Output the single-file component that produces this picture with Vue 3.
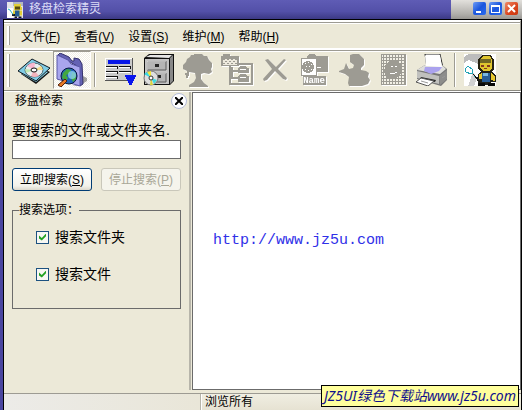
<script setup>
import { ref } from 'vue'

const menus = [
  { label: '文件', key: 'F' },
  { label: '查看', key: 'V' },
  { label: '设置', key: 'S' },
  { label: '维护', key: 'M' },
  { label: '帮助', key: 'H' },
]

const keyword = ref('')
const searchFolders = ref(true)
const searchFiles = ref(true)
const searching = ref(false)

function startSearch() {
  searching.value = true
}

function stopSearch() {
  searching.value = false
}
</script>

<template>
  <div class="window">
    <!-- Title bar -->
    <header class="title-bar">
      <svg class="title-icon" width="16" height="16" viewBox="0 0 32 32" aria-hidden="true">
        <rect width="32" height="32" fill="#e4e4e8" />
        <path d="M0 12h12v20H0z" fill="#fff" />
        <path d="M12 0h20v8H12z" fill="#b4b8c0" />
        <path d="M14 4h14v6h2v6H14z" fill="#e3cf38" />
        <path d="M16 9h10v6H16z" fill="#574b12" />
        <path d="M12 17h18v10H12z" fill="#e3cf38" />
        <path d="M16 17h9v12h-9z" fill="#245d92" />
        <path d="M10 24h6v4h-6zM15 29h5v3h-5zM23 29h6v3h-6z" fill="#17181c" />
        <path d="M2 14l4 2 6 9" fill="none" stroke="#2bb6c4" stroke-width="2" />
      </svg>
      <h1>移盘检索精灵</h1>
      <div class="window-buttons">
        <button type="button" class="win-btn" aria-label="最小化">
          <svg width="13" height="13" viewBox="0 0 13 13"><path d="M3 9h5v2H3z" fill="#fff" /></svg>
        </button>
        <button type="button" class="win-btn" aria-label="最大化">
          <svg width="13" height="13" viewBox="0 0 13 13">
            <path d="M2 3h9v8H2zM3 5v5h7V5z" fill="#fff" fill-rule="evenodd" />
          </svg>
        </button>
        <button type="button" class="win-btn win-close" aria-label="关闭">
          <svg width="13" height="13" viewBox="0 0 13 13">
            <path d="M3 3l7 7M10 3l-7 7" stroke="#fff" stroke-width="2" />
          </svg>
        </button>
      </div>
    </header>

    <div class="frame">
      <!-- Menu bar -->
      <nav class="menu-bar">
        <span class="grip"></span>
        <button v-for="menu in menus" :key="menu.key" type="button" class="menu-item">
          {{ menu.label }}(<u>{{ menu.key }}</u>)
        </button>
      </nav>

      <!-- Tool bar -->
      <div class="tool-bar">
        <span class="grip"></span>
        <button type="button" class="tool" aria-label="光盘">
          <svg width="32" height="32" viewBox="0 0 32 32">
            <path d="M3 20L14 9l18 9-14 12z" fill="#151515" />
            <path d="M4 20l11-10 15 8-12 10z" fill="#8ed7eb" />
            <path d="M0 17L14 5l18 9-14 13z" fill="#80cde6" stroke="#101820" />
            <ellipse cx="16" cy="16" rx="9" ry="7" fill="#e8eeee" stroke="#52666e" />
            <path d="M16 16L9 12q4-4 8-3z" fill="#f7b7cf" />
            <path d="M16 16l7-4 2 4z" fill="#f0dc8a" />
            <path d="M16 16l5 6q-5 2-8 0z" fill="#f3b5be" />
            <path d="M16 16l-8 3-1-4z" fill="#bfe9b4" />
            <ellipse cx="16" cy="16" rx="3" ry="2" fill="#fff" stroke="#111" />
          </svg>
        </button>
        <button type="button" class="tool pressed" aria-label="检索">
          <svg width="32" height="34" viewBox="0 0 32 34">
            <path d="M25 22l6 3v3l-8 5h-7l9-2z" fill="#000" opacity=".35" />
            <path d="M2 2l2-2 9 4 3 4h2V5l5 1 3 5 1 20-3 2-3-20z" fill="#6462b4" stroke="#34316c" />
            <path d="M1 2l11 5 3 4 9 3v19L1 26z" fill="#a9a6ee" stroke="#5b58a8" />
            <circle cx="13" cy="23" r="8" fill="#2264b8" stroke="#07183a" />
            <path d="M7 20l4-4 4 1-2 4-3 1 2 3-2 3-4-3zM16 19l4 2v5l-3 3-2-4z" fill="#44a83f" />
            <circle cx="16" cy="22" r="4" fill="#8bd0ed" opacity=".8" />
            <path d="M9 26l2 2-6 6-3-2z" fill="#e87824" stroke="#51200b" />
          </svg>
        </button>
        <span class="divider"></span>
        <button type="button" class="tool" aria-label="列表">
          <svg width="32" height="32" viewBox="0 0 32 32" shape-rendering="crispEdges">
            <path d="M1 4h28v23H1z" fill="#c9c9c9" />
            <path d="M1 4h28v1H2v21H1z" fill="#fff" />
            <path d="M28 4h1v23H1v-1h27z" fill="#555" />
            <path d="M4 6h22v4H4z" fill="#0716e8" />
            <path d="M2 12h12v1H2zM15 12h12v1H15zM2 17h12v1H2zM15 17h12v1H15zM2 22h12v1H2z" fill="#111" />
            <path d="M2 13h11v1H2zM15 13h11v1H15zM2 18h11v1H2zM15 18h11v1H15zM2 23h11v1H2z" fill="#fff" />
            <path d="M13 12h1v3h-1zM13 17h1v3h-1zM13 22h1v3h-1zM26 12h1v3h-1z" fill="#111" />
            <path d="M21 21h11v2h-1v2h-1v2h-1v2h-1v2h-3v-2h-1v-2h-1v-2h-1v-2h-1z" fill="#0915ed" />
          </svg>
        </button>
        <button type="button" class="tool" aria-label="光盘柜">
          <svg width="32" height="32" viewBox="0 0 32 32">
            <path d="M1 4l5-4h25v27l-4 4H1z" fill="#111" />
            <path d="M3 3l4-2h22l-3 3z" fill="#e7e7e7" />
            <path d="M27 4l3-3v26l-3 3z" fill="#888" />
            <path d="M2 5h24v25H2z" fill="#c4c4c4" />
            <path d="M4 7h19v9H4zM4 19h19v9H4z" fill="#b5b5b5" stroke="#5a5a5a" />
            <path d="M4 16V7h19M4 28v-9h19" fill="none" stroke="#eee" />
            <path d="M12 10h4v3h-4zM13 21h5v3h-5z" fill="#262626" />
            <circle cx="8" cy="24" r="7" fill="#dedede" stroke="#777" />
            <path d="M8 24L4 18l4-1z" fill="#f5e736" />
            <path d="M8 24l-7-4 3-2z" fill="#38d9e5" />
            <path d="M8 24l6 2-3 4z" fill="#42dcdd" />
            <path d="M8 24l2 7H7z" fill="#ddd43b" />
            <circle cx="8" cy="24" r="2" fill="#fff" stroke="#333" />
          </svg>
        </button>
        <button type="button" class="tool" disabled aria-label="目录树">
          <svg width="32" height="32" viewBox="0 0 32 32">
            <path
              d="M12 0h8l2 2h3l2 4 3 3v4l-1 2 1 3-3 2-5-1-3 1v5l3 4 4 3v1H7v-2l5-3 2-4-1-5-6-1v4H6v2H4v-3H3v-2h2v-2l-4-2v-4l3-3 1-3 3-2 1-2h3z"
            />
          </svg>
        </button>
        <button type="button" class="tool" disabled aria-label="文件夹">
          <svg width="32" height="32" viewBox="0 0 32 32" shape-rendering="crispEdges">
            <path d="M0 2h2V0h7v2h9v10H0zM10 13h2v10h5v2h-7zM12 16h5v2h-5zM17 14l2-2h5l2 2h2v5H17zM17 22l2-2h5l2 2h2v6H17zM18 9h14v22H9v-2h21V11H18z" />
            <path d="M2 5h14v6H2z" fill="#eeeade" />
            <path
              d="M2 5h2v1H2zM6 5h2v1H6zM10 5h2v1h-2zM14 5h2v1h-2zM4 7h2v1H4zM8 7h2v1H8zM12 7h2v1h-2zM2 9h2v1H2zM6 9h2v1H6zM10 9h2v1h-2zM14 9h2v1h-2z"
            />
            <path d="M19 15h6v1h-6zM19 23h6v1h-6z" fill="#fff" />
            <path d="M8 12h2v19H8z" />
          </svg>
        </button>
        <button type="button" class="tool" disabled aria-label="删除">
          <svg width="32" height="32" viewBox="0 0 32 32">
            <path d="M5 6l3-1 8 8 8-8 2 1-8 9 9 9-1 2-3-1-8-8-8 9-3 1-1-2 9-10z" />
          </svg>
        </button>
        <button type="button" class="tool" disabled aria-label="重命名">
          <svg width="32" height="32" viewBox="0 0 32 32" shape-rendering="crispEdges">
            <path d="M8 2l2-2h5l2 2h12v16H8z" />
            <path d="M2 4h15v17H2z" fill="#fff" stroke="#9d9b93" />
            <circle cx="9" cy="13" r="6" />
            <path d="M6 9h1v1H6zM9 8h1v1H9zM12 10h1v1h-1zM7 12h1v1H7zM10 12h1v1h-1zM6 15h1v1H6zM9 16h1v1H9zM12 15h1v1h-1z" fill="#fff" />
            <path d="M18 13h4v1h-4z" fill="#fff" />
            <path d="M4 22h23v9H4z" />
            <text x="15" y="29" text-anchor="middle">Name</text>
          </svg>
        </button>
        <button type="button" class="tool" disabled aria-label="向导">
          <svg width="32" height="32" viewBox="0 0 32 32">
            <path
              d="M12 1l3-1h6l3 3 2 2v6l-3 3v2l5 1 3 2-1 4 2 3-2 4-6 2H11l-1-3 1-6-4-3-6-2v-1l5-2 2-6 3 6 4-1 1-3-4-3z"
            />
          </svg>
        </button>
        <button type="button" class="tool" disabled aria-label="图片">
          <svg width="32" height="32" viewBox="0 0 32 32" shape-rendering="crispEdges">
            <defs>
              <pattern id="grid" width="3" height="3" patternUnits="userSpaceOnUse">
                <rect width="3" height="3" fill="#9d9b93" />
                <path d="M1 1h2v2H1z" fill="#f2f0e6" />
              </pattern>
            </defs>
            <path d="M4 0h25v31H4z" />
            <path d="M5 1h23v29H5z" fill="url(#grid)" />
            <path d="M12 7l9-1 4 7-1 6-6 6h-7l-4-7 1-6z" />
            <path d="M14 12h2v1h-2zM18 12h2v1h-2zM13 19h5v1h-5zM18 18h2v1h-2z" fill="#fff" />
          </svg>
        </button>
        <button type="button" class="tool" aria-label="打印">
          <svg width="32" height="32" viewBox="0 0 32 32">
            <path d="M9 0h15l3 14H11z" fill="#fff" stroke="#222" />
            <path d="M1 16l8-5h17l5 4v11l-6 6-24-7z" fill="#777" />
            <path d="M1 16l8-5h17l4 4-6 5z" fill="#dededb" />
            <path d="M9 13h17l-3 4-8 3-7-3z" fill="#aaa2ee" />
            <path d="M10 12L9 2l1-1h14l2 12z" fill="#fff" />
            <path d="M1 17l22 5v8L1 24z" fill="#c0c0bd" />
            <path d="M23 22l8-6v9l-7 6z" fill="#8d8d8b" />
            <path d="M5 23l15 3-1 2-15-3z" fill="#292929" />
            <path d="M5 24l13 3-6 5-12-4z" fill="#fff" stroke="#555" />
            <path d="M5 27l7 2M26 24l3-2" stroke="#999" />
          </svg>
        </button>
        <span class="divider"></span>
        <button type="button" class="tool" aria-label="关于">
          <svg width="32" height="32" viewBox="0 0 32 32" shape-rendering="crispEdges">
            <path d="M0 0h32v32H0z" fill="#fff" />
            <path d="M5 0h13v5l-4 5L5 6 0 9V3z" fill="#bcbcbc" />
            <path d="M9 18l4 6-3 8H4z" fill="#d1d1d1" />
            <path d="M14 5l4-4h9l3 5v9l-3 4h-9l-4-5z" fill="#262211" />
            <path d="M16 6l3-4h7l2 4v8l-3 3h-6l-3-4z" fill="#dfc52e" />
            <path d="M16 5h11v4H16z" fill="#706724" />
            <path d="M17 11h3v2h-3zM23 11h3v2h-3zM20 14h3v1h-3z" fill="#863a20" />
            <path d="M14 20l4-3h9l5 4v7h-5v3H16l-3-5z" fill="#202018" />
            <path d="M15 20l3-1v6h-3zM27 19l4 3v5l-4-1z" fill="#e7c72f" />
            <path d="M18 19h8v9h-8z" fill="#285d97" />
            <path d="M19 19h5v3h-5z" fill="#7bb7df" />
            <path d="M14 29h7v3h-7zM24 29h7v3h-7z" fill="#090909" />
            <path d="M1 15l3-3 4 3 1 3-2 2-5-2zM8 19l7 8" fill="none" stroke="#21a3b5" />
            <path d="M9 20l7 8" stroke="#111" />
          </svg>
        </button>
      </div>

      <main class="workspace">
        <!-- Search panel -->
        <aside class="search-panel">
          <div class="panel-header">
            <h2>移盘检索</h2>
            <button type="button" class="panel-close" aria-label="关闭面板">
              <svg width="8" height="8" viewBox="0 0 8 8">
                <path d="M0 0l8 8M8 0L0 8" stroke="#000" stroke-width="2" />
              </svg>
            </button>
          </div>
          <form class="search-form" @submit.prevent="startSearch">
            <label class="keyword-label" for="keyword">要搜索的文件或文件夹名.</label>
            <input id="keyword" v-model="keyword" type="text" class="keyword-input" />
            <div class="form-actions">
              <button type="submit" class="btn btn-default">立即搜索(<u>S</u>)</button>
              <button type="button" class="btn" :disabled="!searching" @click="stopSearch">
                停止搜索(<u>P</u>)
              </button>
            </div>
            <fieldset class="options">
              <legend>搜索选项：</legend>
              <label class="option">
                <input v-model="searchFolders" type="checkbox" />
                搜索文件夹
              </label>
              <label class="option">
                <input v-model="searchFiles" type="checkbox" />
                搜索文件
              </label>
            </fieldset>
          </form>
        </aside>

        <!-- Results -->
        <section class="results">
          <a href="http://www.jz5u.com" class="site-link">http://www.jz5u.com</a>
        </section>
      </main>

      <footer class="status-bar">
        <div class="status-left"></div>
        <div class="status-text">浏览所有</div>
      </footer>
    </div>

    <div class="watermark">JZ5UI绿色下载站www.jz5u.com</div>
  </div>
</template>

<style>
body {
  margin: 0;
  background: #ece9d8;
}
</style>

<style scoped>
.window {
  position: relative;
  display: flex;
  flex-direction: column;
  min-height: 100vh;
  box-sizing: border-box;
  font-family: 'Liberation Sans', 'Noto Sans CJK SC', sans-serif;
  font-size: 12px;
  line-height: 16px;
  color: #000;
}

button,
input {
  font: inherit;
}

button {
  padding: 0;
  color: inherit;
  background: none;
  border: none;
}

h1,
h2 {
  margin: 0;
  font-size: 12px;
  font-weight: normal;
}

.title-bar {
  display: flex;
  align-items: center;
  height: 19px;
  padding-left: 7px;
  background: linear-gradient(#5f5cb5, #5350a8 60%, #3c3984);
}

.title-icon {
  margin-top: 1px;
}

.title-bar h1 {
  flex: 1;
  margin-left: 6px;
  padding-bottom: 2px;
  color: #dcdcf6;
}

.window-buttons {
  display: flex;
  align-items: center;
  align-self: stretch;
  gap: 3px;
  padding: 0 4px 3px 22px;
  background: linear-gradient(#e2e0dc, #b0aeaa 75%, #989692);
}

.win-btn {
  display: flex;
  width: 13px;
  height: 13px;
  background: linear-gradient(135deg, #6d9cf5, #1b56dd 50%, #2a6bf0);
  border-radius: 2px;
}

.win-close {
  background: linear-gradient(135deg, #ef8a68, #d9431c 60%, #c8380f);
}

.frame {
  display: flex;
  flex: 1;
  flex-direction: column;
  background: #ece9d8;
  border: solid #000;
  border-width: 1px 1px 0 1px;
  box-shadow: -3px 0 0 #4a46a0;
  margin-left: 3px;
}

.menu-bar,
.tool-bar {
  display: flex;
  align-items: center;
  padding-left: 3px;
  border-top: 1px solid #fff;
  border-right: 1px solid #9d9b93;
  box-shadow: inset 0 1px #fff, inset 0 2px #9d9b93, inset 0 3px #fff;
}

.menu-bar {
  height: 27px;
}

.tool-bar {
  height: 41px;
  border-bottom: 1px solid #8d8b83;
}

.grip {
  width: 3px;
  align-self: stretch;
  margin: 5px 4px 3px 0;
  box-sizing: border-box;
  background: #fff;
  border-right: 1px solid #9d9b93;
}

.menu-item {
  margin: 4px 14px 0 0;
}

.menu-bar .grip {
  margin-right: 11px;
}

.tool {
  display: flex;
  flex: none;
  align-items: center;
  justify-content: center;
  width: 39px;
  height: 38px;
  box-sizing: border-box;
}

.pressed {
  width: 38px;
  background: repeating-conic-gradient(#fff 0 25%, #f1efe6 0 50%) 0 0 / 2px 2px;
  border: 1px solid #fff;
  border-top-color: #9d9b93;
  border-left-color: #9d9b93;
}

.tool:disabled svg {
  overflow: visible;
  fill: #9d9b93;
  filter: drop-shadow(1px 1px 0 #fff);
}

.tool text {
  font-size: 9px;
  font-weight: bold;
  font-family: 'Liberation Mono', monospace;
  fill: #fff;
}

.divider {
  flex: none;
  width: 2px;
  height: 34px;
  margin: 0 4px 0 3px;
  box-sizing: border-box;
  background: #fff;
  border-left: 1px solid #9d9b93;
}

.workspace {
  display: flex;
  flex: 1;
  border-top: 1px solid #fff;
}

.search-panel {
  width: 187px;
  flex: none;
  box-sizing: border-box;
  border-right: 2px solid #b7b5aa;
}

.panel-header {
  display: flex;
  align-items: center;
  justify-content: space-between;
  height: 18px;
  padding: 0 2px 0 11px;
}

.panel-close {
  display: flex;
  align-items: center;
  justify-content: center;
  width: 16px;
  height: 16px;
  box-sizing: border-box;
  background: #fdfdff;
  border: 1px solid #b4bcd8;
  border-radius: 50%;
}

.search-form {
  display: flex;
  flex-direction: column;
  padding: 10px 8px 0;
}

.keyword-label {
  font-size: 14px;
  line-height: 20px;
  white-space: nowrap;
}

.keyword-input {
  width: 100%;
  height: 19px;
  box-sizing: border-box;
  padding: 0 3px;
  background: #fff;
  border: 1px solid #6b6b6b;
  outline: none;
}

.form-actions {
  display: flex;
  gap: 9px;
  margin-top: 9px;
}

.btn {
  flex: 1;
  height: 23px;
  box-sizing: border-box;
  white-space: nowrap;
  background: #f5f4ec;
  border: 1px solid #003c74;
  border-radius: 3px;
}

.btn-default {
  background: linear-gradient(#fff, #f3f2eb 80%, #dcd8cc);
}

.btn:disabled {
  color: #a9a797;
  border-color: #c9c7ba;
}

.options {
  display: flex;
  flex-direction: column;
  gap: 17px;
  min-width: 0;
  height: 107px;
  box-sizing: border-box;
  margin: 11px 0 0;
  padding: 9px 0 0 23px;
  border: 1px solid #6b6b6b;
}

.options legend {
  margin-left: -17px;
  padding: 0;
}

.option {
  display: flex;
  align-items: center;
  gap: 6px;
  font-size: 14px;
  line-height: 20px;
}

.option input {
  display: flex;
  align-items: center;
  justify-content: center;
  width: 13px;
  height: 13px;
  box-sizing: border-box;
  margin: 0;
  appearance: none;
  background: #f7f7f3;
  border: 1px solid #1c5180;
}

.option input:checked::after {
  width: 7px;
  height: 7px;
  content: '';
  background: #21a121;
  clip-path: polygon(0 30%, 40% 65%, 100% 0, 100% 40%, 40% 100%, 0 70%);
}

.results {
  display: flex;
  flex: 1;
  align-items: center;
  margin-left: 1px;
  padding-left: 20px;
  background: #fff;
  border: 1px solid #6b6b6b;
}

.site-link {
  color: #3030e8;
  font-family: 'Liberation Mono', monospace;
  font-size: 15px;
  text-decoration: none;
}

.status-bar {
  display: flex;
  height: 16px;
  margin-top: 3px;
  background: linear-gradient(#f0eee2, #e6e2d2);
  border-top: 1px solid #9d9b93;
}

.status-left {
  width: 197px;
  box-sizing: border-box;
  background: linear-gradient(90deg, #ecebe8, #e9e6d8);
  border-right: 1px solid #b7b5aa;
}

.status-text {
  padding-left: 3px;
  border-left: 1px solid #fff;
}

.watermark {
  position: absolute;
  right: 3px;
  bottom: 3px;
  height: 22px;
  box-sizing: border-box;
  padding: 0 2px;
  color: #10108c;
  font-family: 'Noto Sans', 'Noto Sans CJK SC', sans-serif;
  font-size: 14px;
  font-style: italic;
  line-height: 20px;
  white-space: nowrap;
  background: #ffff9c;
  border: 1px solid #000;
}
</style>
